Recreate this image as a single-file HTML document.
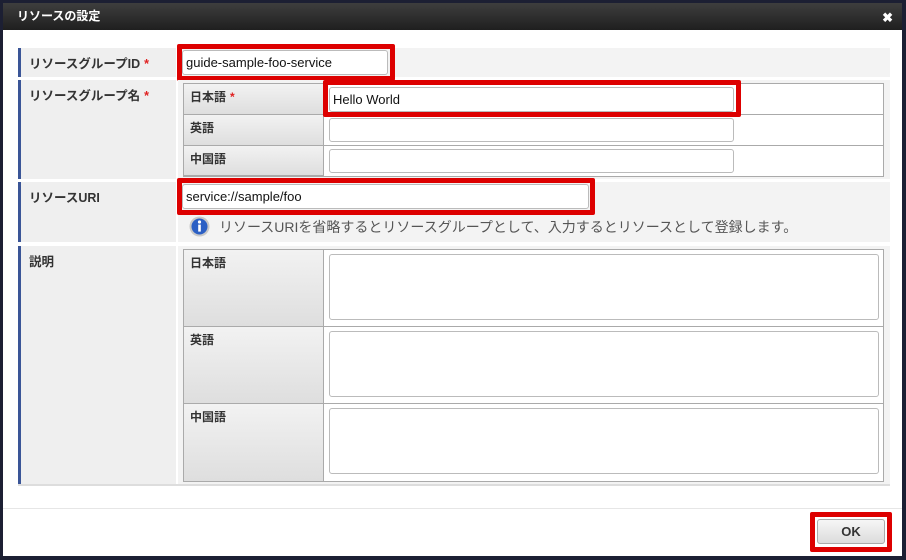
<!DOCTYPE html>
<html><head><meta charset="utf-8"><style>
*{margin:0;padding:0;box-sizing:border-box}
body{width:906px;height:560px;background:#1c1f33;position:relative;overflow:hidden;font-family:"Liberation Sans","Noto Sans CJK JP",sans-serif;font-size:12px;color:#333}
.a{position:absolute}
.dlg{left:3px;top:3px;width:899px;height:553px;background:#fff}
.title{left:3px;top:3px;width:899px;height:27px;background:linear-gradient(#3e3e3e,#1f1f1f);color:#fff;font-weight:bold;font-size:12px;padding:4px 0 0 14px}
.x{right:13px;top:11px;color:#fff;font-weight:bold;font-size:13px;line-height:13px}
.lab{background:#efefef;border-left:3px solid #3a5597;font-weight:bold;padding:5px 0 0 8px;font-size:12.5px}
.val{background:#f3f3f3}
.req{color:#e02020;margin-left:4px}
.in{background:#fff;border:1px solid #bbb;border-radius:3px;font-size:13px;padding:4px 3px;color:#111}
.red{border:5px solid #dd0000;border-radius:2px}
.it{background:#fff;border:1px solid #aaa}
.il{background:linear-gradient(#f2f2f2,#dedede);border-right:1px solid #aaa;border-bottom:1px solid #aaa;font-weight:bold;padding:4px 0 0 6px}
.ir{border-bottom:1px solid #aaa}
</style></head><body>
<div class="a dlg"></div>
<div class="a title">リソースの設定</div>
<div class="a x">✖</div>

<div class="a lab" style="left:18px;top:48px;width:158px;height:29px">リソースグループID<span class="req">*</span></div>
<div class="a val" style="left:178px;top:48px;width:712px;height:29px"></div>
<div class="a in" style="left:182px;top:50px;width:206px;height:25px">guide-sample-foo-service</div>
<div class="a red" style="left:177px;top:44px;width:218px;height:37px"></div>

<div class="a lab" style="left:18px;top:80px;width:158px;height:99px">リソースグループ名<span class="req">*</span></div>
<div class="a val" style="left:178px;top:80px;width:712px;height:99px"></div>
<div class="a it" style="left:183px;top:83px;width:701px;height:94px"></div>
<div class="a il" style="left:184px;top:84px;width:140px;height:31px">日本語<span class="req">*</span></div>
<div class="a il" style="left:184px;top:115px;width:140px;height:31px">英語</div>
<div class="a il" style="left:184px;top:146px;width:140px;height:30px">中国語</div>
<div class="a ir" style="left:324px;top:84px;width:559px;height:31px"></div>
<div class="a ir" style="left:324px;top:115px;width:559px;height:31px"></div>
<div class="a in" style="left:329px;top:87px;width:405px;height:25px">Hello World</div>
<div class="a in" style="left:329px;top:118px;width:405px;height:24px"></div>
<div class="a in" style="left:329px;top:149px;width:405px;height:24px"></div>
<div class="a red" style="left:323px;top:80px;width:418px;height:37px"></div>

<div class="a lab" style="left:18px;top:182px;width:158px;height:60px">リソースURI</div>
<div class="a val" style="left:178px;top:182px;width:712px;height:60px"></div>
<div class="a in" style="left:182px;top:184px;width:407px;height:25px">service://sample/foo</div>
<div class="a red" style="left:177px;top:178px;width:418px;height:37px"></div>
<svg class="a" style="left:189px;top:216px" width="21" height="21" viewBox="0 0 21 21"><circle cx="10.5" cy="10.5" r="10" fill="#c8c8c8"/><circle cx="10.5" cy="10.5" r="8" fill="#2b5fc4"/><circle cx="10.5" cy="6" r="1.6" fill="#fff"/><rect x="9.2" y="8.6" width="2.6" height="7" fill="#fff"/></svg>
<div class="a" style="left:219px;top:217px;font-size:14px;color:#555;white-space:nowrap">リソースURIを省略するとリソースグループとして、入力するとリソースとして登録します。</div>

<div class="a lab" style="left:18px;top:246px;width:158px;height:238px">説明</div>
<div class="a val" style="left:178px;top:246px;width:712px;height:238px"></div>
<div class="a it" style="left:183px;top:249px;width:701px;height:233px"></div>
<div class="a il" style="left:184px;top:250px;width:140px;height:77px">日本語</div>
<div class="a il" style="left:184px;top:327px;width:140px;height:77px">英語</div>
<div class="a il" style="left:184px;top:404px;width:140px;height:77px;border-bottom:none">中国語</div>
<div class="a ir" style="left:324px;top:250px;width:559px;height:77px"></div>
<div class="a ir" style="left:324px;top:327px;width:559px;height:77px"></div>
<div class="a in" style="left:329px;top:254px;width:550px;height:66px"></div>
<div class="a in" style="left:329px;top:331px;width:550px;height:66px"></div>
<div class="a in" style="left:329px;top:408px;width:550px;height:66px"></div>
<div class="a" style="left:18px;top:484px;width:872px;height:2px;background:#ddd"></div>

<div class="a" style="left:3px;top:508px;width:899px;height:1px;background:#e6e6e6"></div>
<div class="a" style="left:817px;top:519px;width:68px;height:25px;border:1px solid #aaa;border-radius:3px;background:linear-gradient(#f6f6f6,#dcdcdc);font-weight:bold;font-size:13px;text-align:center;line-height:23px;color:#333">OK</div>
<div class="a red" style="left:810px;top:512px;width:82px;height:40px"></div>
</body></html>
